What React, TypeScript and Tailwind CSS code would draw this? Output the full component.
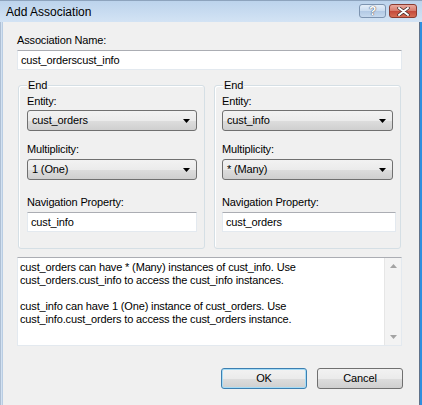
import { ReactNode } from 'react';

const field = 'bg-white border border-[#e3e9ef] border-t-[#abadb3] flex items-center';

function Combo({ value, w }: { value: string; w: string }) {
  return (
    <div
      className={`${w} h-[21px] flex items-center rounded-[3px] border border-[#707070] pl-[4px] pr-[6px] bg-[linear-gradient(#f2f2f2_0%,#ebebeb_50%,#dddddd_51%,#cfcfcf_100%)]`}
    >
      <span className="flex-1">{value}</span>
      <svg width="7" height="4" viewBox="0 0 7 4">
        <path d="M0 0h7L3.5 4z" fill="#000" />
      </svg>
    </div>
  );
}

function Group({
  entity,
  mult,
  nav,
  pad,
  comboW,
  inputW,
}: {
  entity: string;
  mult: string;
  nav: string;
  pad: string;
  comboW: string;
  inputW: string;
}) {
  return (
    <div
      className={`relative w-[187px] h-[164px] rounded-[3px] border border-[#d5dfe5] shadow-[inset_1px_1px_0_#fff] ${pad} pt-[9px]`}
    >
      <span className="absolute left-[8px] -top-[7px] px-[1px] bg-[#f0f0f0]">End</span>
      <div className="h-[13px]">Entity:</div>
      <div className="mt-[2px]">
        <Combo value={entity} w={comboW} />
      </div>
      <div className="mt-[12px] h-[13px]">Multiplicity:</div>
      <div className="mt-[3px]">
        <Combo value={mult} w={comboW} />
      </div>
      <div className="mt-[16px] h-[13px]">Navigation Property:</div>
      <div className={`mt-[3px] h-[20px] px-[3px] ${inputW} ${field}`}>{nav}</div>
    </div>
  );
}

function Btn({ children, def }: { children: ReactNode; def?: boolean }) {
  return (
    <div
      className={`w-[86px] h-[21px] flex items-center justify-center rounded-[3px] border bg-[linear-gradient(#f2f2f2_0%,#ebebeb_50%,#dddddd_51%,#cfcfcf_100%)] ${
        def ? 'border-[#3c7fb1] shadow-[inset_0_0_0_1px_#a6dcf6]' : 'border-[#707070]'
      }`}
    >
      {children}
    </div>
  );
}

export default function App() {
  return (
    <div className="w-[422px] h-[405px] overflow-hidden flex flex-col bg-[#f0f0f0] text-black font-['Liberation_Sans',Arial,sans-serif] text-[11px] leading-[13px] tracking-[-0.15px]">
      {/* title bar */}
      <div className="h-[22px] flex border-t border-[#8da3bd] bg-[linear-gradient(#bcd3ec,#d3e3f4)]">
        <span className="pl-[6px] pt-[4px] text-[12px] leading-[14px] tracking-normal">Add Association</span>
        <div className="ml-auto mt-[3px] mr-[5px] flex gap-[3px]">
          <div className="w-[27px] h-[14px] rounded-[3px] border border-[#7d94b0] bg-[linear-gradient(#e4eef9_0%,#c9dbef_50%,#b2c9e4_51%,#c6d9ee_100%)] flex items-center justify-center text-[12px] font-bold text-white leading-none [text-shadow:0_0_1px_#445,0_0_1px_#445]">
            ?
          </div>
          <div className="w-[28px] h-[14px] rounded-[3px] border border-[#8a3b30] bg-[linear-gradient(#e9a99e_0%,#d77a6b_50%,#c4493a_51%,#d66e55_100%)] flex items-center justify-center">
            <svg width="13" height="9" viewBox="0 0 13 9">
              <path d="M2 1l9 7M11 1L2 8" stroke="#3b2a28" strokeWidth="3.4" strokeLinecap="round" />
              <path d="M2 1l9 7M11 1L2 8" stroke="#fff" strokeWidth="2" strokeLinecap="round" />
            </svg>
          </div>
        </div>
      </div>

      <div className="flex-1 flex">
        <div className="w-[3px] flex">
          <div className="w-[1px] bg-[#aebfd4]" />
          <div className="w-[1px] bg-[#d2e1f1]" />
          <div className="w-[1px] bg-[#b9cde3]" />
        </div>

        <div className="flex-1 flex flex-col pl-[14px] pr-[17px]">
          <div className="mt-[12px] h-[13px]">Association Name:</div>
          <div className={`mt-[3px] h-[20px] px-[3px] ${field}`}>cust_orderscust_info</div>

          <div className="mt-[15px] ml-[1px] flex gap-[9px]">
            <Group
              entity="cust_orders"
              mult="1 (One)"
              nav="cust_info"
              pad="pl-[8px]"
              comboW="w-[170px]"
              inputW="w-[170px]"
            />
            <Group
              entity="cust_info"
              mult="* (Many)"
              nav="cust_orders"
              pad="pl-[7px]"
              comboW="w-[171px]"
              inputW="w-[174px]"
            />
          </div>

          {/* description */}
          <div className="mt-[8px] h-[89px] flex bg-white border border-[#e3e9ef] border-t-[#abadb3]">
            <div className="flex-1 pl-[2px] pt-[3px]">
              <p>cust_orders can have * (Many) instances of cust_info. Use</p>
              <p>cust_orders.cust_info to access the cust_info instances.</p>
              <p className="mt-[13px]">cust_info can have 1 (One) instance of cust_orders. Use</p>
              <p>cust_info.cust_orders to access the cust_orders instance.</p>
            </div>
            <div className="w-[17px] flex flex-col justify-between items-center bg-[#f3f3f3] border-l border-[#e6e6e6] py-[6px]">
              <svg width="7" height="4" viewBox="0 0 7 4">
                <path d="M0 4h7L3.5 0z" fill="#a3a3a3" />
              </svg>
              <svg width="7" height="4" viewBox="0 0 7 4">
                <path d="M0 0h7L3.5 4z" fill="#a3a3a3" />
              </svg>
            </div>
          </div>

          <div className="mt-[22px] -mr-[1px] flex justify-end gap-[10px]">
            <Btn def>OK</Btn>
            <Btn>Cancel</Btn>
          </div>
        </div>

        <div className="w-[3px] flex">
          <div className="w-[1px] bg-[#5f7189]" />
          <div className="w-[2px] bg-[#2f8fdf]" />
        </div>
      </div>
    </div>
  );
}
